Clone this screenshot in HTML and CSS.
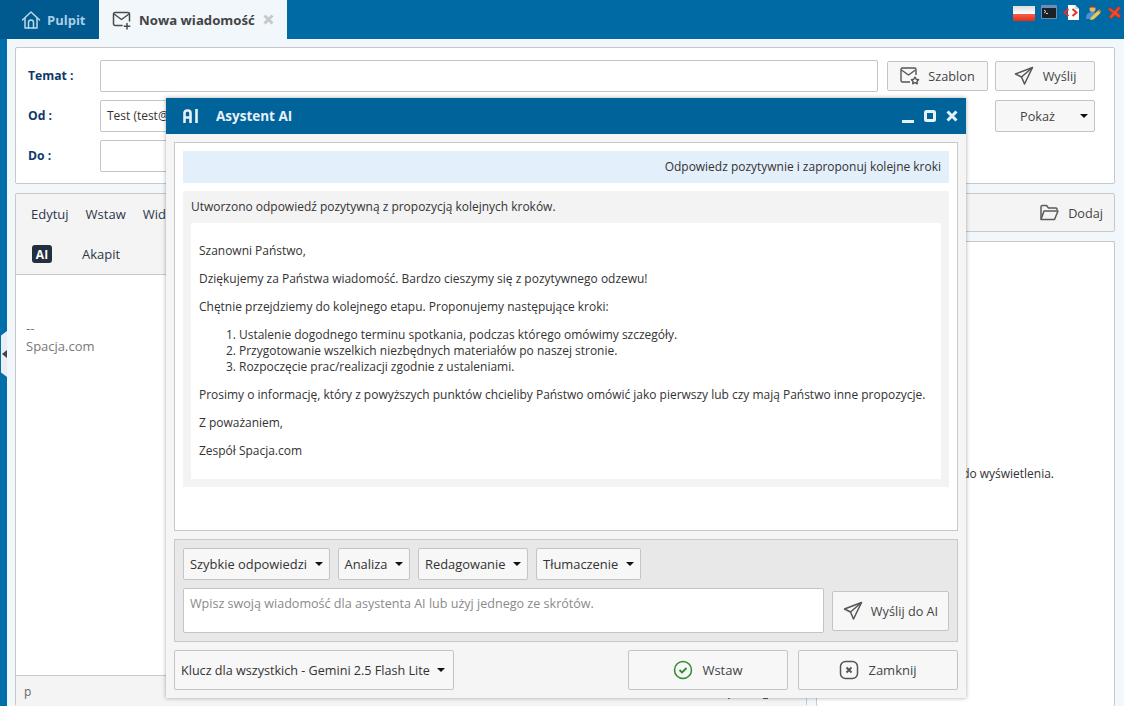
FILE: index.html
```html
<!DOCTYPE html>
<html lang="pl">
<head>
<meta charset="utf-8">
<title>Nowa wiadomość</title>
<link rel="stylesheet" href="styles.css">
</head>
<body>
<div class="app">
  <header class="topbar">
    <nav class="tabs">
      <a class="tab tab-home">
        <svg class="ico-home" width="20" height="20" viewBox="0 0 20 20" fill="none" stroke="#bcd9ea" stroke-width="1.5" stroke-linejoin="round" stroke-linecap="round"><path d="M1.5 10 10 2l8.500 8"/><path d="M4 8.500V18h12V8.500"/><path d="M7.500 18v-5.500a2.500 2.500 0 0 1 5 0V18"/></svg>
        <span>Pulpit</span>
      </a>
      <a class="tab tab-active">
        <svg width="20" height="20" viewBox="0 0 20 20" fill="none" stroke="#4b4b4b" stroke-width="1.500" stroke-linejoin="round" stroke-linecap="round"><path d="M10 15.500H3a1.500 1.500 0 0 1-1.500-1.500V4A1.500 1.500 0 0 1 3 2.500h13A1.500 1.500 0 0 1 17.500 4v7"/><path d="m2 4 7.500 5.500L17 4"/><path d="M15 13.500v5.500M12.300 16.300h5.500"/></svg>
        <span class="tab-title">Nowa wiadomość</span>
        <svg class="tab-close" width="11" height="11" viewBox="0 0 11 11"><path d="m1.500 1.500 8 8M9.500 1.500l-8 8" stroke="#c8c8c8" stroke-width="3"/></svg>
      </a>
    </nav>
    <div class="tray">
      <svg class="tray-flag" width="22" height="15" viewBox="0 0 22 15"><defs><linearGradient id="fw" x1="0" y1="0" x2="0" y2="1"><stop offset="0" stop-color="#dcdcdc"/><stop offset="1" stop-color="#fff"/></linearGradient><linearGradient id="fr" x1="0" y1="0" x2="0" y2="1"><stop offset="0" stop-color="#ff5a45"/><stop offset="1" stop-color="#e0301e"/></linearGradient></defs><rect width="22" height="8" fill="url(#fw)"/><rect y="8" width="22" height="7" fill="url(#fr)"/></svg>
      <svg width="16" height="14" viewBox="0 0 16 14"><rect width="16" height="14" rx="1" fill="#6d8cb8"/><rect x="1" y="3" width="14" height="10" fill="#1c2128"/><path d="m3 5 2 1.500L3 8" fill="none" stroke="#fff" stroke-width=".8"/><rect x="5" y="8" width="2" height=".8" fill="#fff"/></svg>
      <svg width="16" height="15" viewBox="0 0 16 15"><path d="M5 0h7l4 4v11H5z" fill="#fff"/><path d="M12 0v4h4z" fill="#d5d5d5"/><path d="M5.500 4 1.500 7.500l4 3.500M9.500 4l4 3.500-4 3.500" fill="none" stroke="#e5312a" stroke-width="2"/></svg>
      <svg width="16" height="15" viewBox="0 0 16 15"><circle cx="7.500" cy="4" r="3" fill="#eab27a"/><path d="M4.500 3.500a3 3 0 0 1 6 0l-1-1h-4z" fill="#7a4a1d"/><path d="M1 14c0-5 2-7 6-7s4 1 5 3l-5 4z" fill="#4a90d6"/><path d="m6 12.500 7-7 2.500 2.500-7 6.500-3.500.5z" fill="#f2c84b"/><path d="m13 5.500 1.200-1.200 2 2-1 1.500z" fill="#d9803a"/></svg>
      <svg width="15" height="14" viewBox="0 0 15 14"><path d="M2.500 2.500 7.500 6l4-4.500 2 1.500-3.500 4.500 4 3.500-2 2-4-3-3.500 3.500L2 12l3.500-4L1.500 4.500z" fill="#ee4a2c" stroke="#c9311b" stroke-width="1" stroke-linejoin="round"/></svg>
    </div>
  </header>

  <main class="content">
    <section class="card form">
      <div class="form-row">
        <label class="form-label">Temat :</label>
        <div class="field"></div>
        <button class="btn btn-szablon">
          <svg width="20" height="18" viewBox="0 0 20 18" fill="none" stroke="#555" stroke-width="1.400" stroke-linejoin="round"><path d="M10 15H2.500A1.500 1.500 0 0 1 1 13.500v-11A1.500 1.500 0 0 1 2.500 1h12A1.500 1.500 0 0 1 16 2.500V8"/><path d="m1.500 3 7 5 7-5"/><path d="m15 10 1.200 2.300 2.400.4-1.700 1.700.4 2.400-2.300-1.100-2.300 1.100.4-2.400-1.700-1.700 2.400-.4z"/></svg>
          Szablon
        </button>
        <button class="btn btn-send">
          <svg width="20" height="20" viewBox="0 0 20 20" fill="none" stroke="#555" stroke-width="1.500" stroke-linejoin="round"><path d="M18.500 1.500 1.500 8l6 3 3 7z"/><path d="M18.500 1.500 7.500 11"/></svg>
          Wyślij
        </button>
      </div>
      <div class="form-row">
        <label class="form-label">Od :</label>
        <div class="field field-text field-short">Test (test@spacja.com)</div>
        <button class="btn btn-send btn-dd">Pokaż<i class="caret caret-right"></i></button>
      </div>
      <div class="form-row">
        <label class="form-label">Do :</label>
        <div class="field field-short"></div>
      </div>
    </section>

    <section class="columns">
      <div class="card editor">
        <div class="editor-bar">
          <div class="menu"><span>Edytuj</span><span>Wstaw</span><span>Widok</span></div>
          <div class="menu menu-tools"><b class="ai-chip">AI</b><span>Akapit</span></div>
        </div>
        <div class="editor-body">
          <p>--</p>
          <p>Spacja.com</p>
        </div>
        <div class="editor-status">p<i class="status-marks"></i></div>
      </div>
      <div class="side">
        <div class="card side-head">
          <svg width="20" height="17" viewBox="0 0 20 17" fill="none" stroke="#5a5a5a" stroke-width="1.500" stroke-linejoin="round"><path d="M2 15V3a1.500 1.500 0 0 1 1.500-1.500h4L9.500 4H17a1 1 0 0 1 1 1v1"/><path d="M2 15.500h13.500L19 7H5z"/></svg>
          <span>Dodaj</span>
        </div>
        <div class="card side-body">Brak załączników do wyświetlenia.</div>
      </div>
    </section>
  </main>

  <div class="side-handle"><i></i></div>

  <div class="modal">
    <div class="modal-head">
      <svg class="modal-logo" width="16" height="14" viewBox="0 0 16 14" fill="none" stroke="#e8f1f7" stroke-width="2.600"><path d="M1.500 14V4a2.500 2.500 0 0 1 2.500-2.500h1A2.500 2.500 0 0 1 7.500 4v10M1.500 8.500h6"/><path d="M13.500 0v14"/></svg>
      <span class="modal-title">Asystent AI</span>
      <div class="modal-controls">
        <svg width="13" height="13" viewBox="0 0 13 13"><rect x="1" y="10" width="12" height="3" fill="#e8f1f7"/></svg>
        <svg width="12" height="12" viewBox="0 0 12 12"><rect x="1.500" y="1.500" width="9" height="9" rx="1" fill="none" stroke="#e8f1f7" stroke-width="3"/></svg>
        <svg width="12" height="12" viewBox="0 0 12 12"><path d="m1.500 1.500 9 9M10.500 1.500l-9 9" stroke="#e8f1f7" stroke-width="3"/></svg>
      </div>
    </div>
    <div class="modal-body">
      <div class="chat">
        <div class="msg-user">Odpowiedz pozytywnie i zaproponuj kolejne kroki</div>
        <div class="msg-ai">
          <p class="msg-intro">Utworzono odpowiedź pozytywną z propozycją kolejnych kroków.</p>
          <div class="letter">
            <p>Szanowni Państwo,</p>
            <p>Dziękujemy za Państwa wiadomość. Bardzo cieszymy się z pozytywnego odzewu!</p>
            <p>Chętnie przejdziemy do kolejnego etapu. Proponujemy następujące kroki:</p>
            <ol>
              <li>Ustalenie dogodnego terminu spotkania, podczas którego omówimy szczegóły.</li>
              <li>Przygotowanie wszelkich niezbędnych materiałów po naszej stronie.</li>
              <li>Rozpoczęcie prac/realizacji zgodnie z ustaleniami.</li>
            </ol>
            <p>Prosimy o informację, który z powyższych punktów chcieliby Państwo omówić jako pierwszy lub czy mają Państwo inne propozycje.</p>
            <p>Z poważaniem,</p>
            <p>Zespół Spacja.com</p>
          </div>
        </div>
      </div>
      <div class="composer">
        <div class="composer-menus">
          <button class="btn-menu">Szybkie odpowiedzi<i class="caret"></i></button>
          <button class="btn-menu">Analiza<i class="caret"></i></button>
          <button class="btn-menu">Redagowanie<i class="caret"></i></button>
          <button class="btn-menu">Tłumaczenie<i class="caret"></i></button>
        </div>
        <div class="composer-input">
          <div class="prompt">Wpisz swoją wiadomość dla asystenta AI lub użyj jednego ze skrótów.</div>
          <button class="btn btn-ai">
            <svg width="20" height="20" viewBox="0 0 20 20" fill="none" stroke="#555" stroke-width="1.500" stroke-linejoin="round"><path d="M18.500 1.500 1.500 8l6 3 3 7z"/><path d="M18.500 1.500 7.500 11"/></svg>
            Wyślij do AI
          </button>
        </div>
      </div>
      <div class="modal-foot">
        <button class="btn-model">Klucz dla wszystkich - Gemini 2.5 Flash Lite<i class="caret"></i></button>
        <button class="btn btn-foot">
          <svg width="20" height="20" viewBox="0 0 20 20" fill="none" stroke="#2e8b2e" stroke-width="1.500"><circle cx="10" cy="10" r="8.500"/><path d="m6.500 10 2.500 2.500 4.500-4.500" stroke-width="1.800"/></svg>
          Wstaw
        </button>
        <button class="btn btn-foot">
          <svg width="20" height="20" viewBox="0 0 20 20" fill="none" stroke="#555" stroke-width="1.500"><rect x="1.500" y="1.500" width="17" height="17" rx="5"/><path d="m7.500 7.500 5 5M12.500 7.500l-5 5" stroke-width="1.900"/></svg>
          Zamknij
        </button>
      </div>
    </div>
  </div>
</div>
</body>
</html>
```
FILE: styles.css
```css
* { box-sizing: border-box; }
html, body { margin: 0; height: 100%; overflow: hidden; }
body { font-family: "Open Sans", sans-serif; font-size: 11.980px; color: #333; background: #006ea9; }
p { margin: 0; }
button { font: inherit; color: inherit; cursor: default; }

.app { position: relative; width: 1124px; height: 706px; overflow: hidden; padding-left: 7px; display: flex; flex-direction: column; }

.topbar { height: 39px; margin-left: -7px; background: #006aa5; display: flex; justify-content: space-between; flex: none; }
.tabs { display: flex; }
.tab { display: flex; align-items: center; font-weight: 700; font-size: 13px; }
.tab-home { width: 99px; padding-left: 21px; gap: 6px; background: #00598f; color: #a9cfe4; }
.tab-active { width: 188px; padding-left: 13px; gap: 7px; background: #f2f7fc; color: #444; }
.tab-title { font-size: 13.200px; }
.tab-close { margin-left: 1px; }
.tray { display: flex; align-items: flex-start; gap: 6px; padding: 5px 2px 0 0; }
.tray-flag { margin-top: 1px; }

.content { flex: 1; background: #f2f7fc; padding: 8px 9px 0 8px; display: flex; flex-direction: column; gap: 9px; min-height: 0; }
.card { background: #fff; border: 1px solid #c8c8c8; border-radius: 2px; }

.form { height: 137px; padding: 12px 19px 0 12px; display: flex; flex-direction: column; gap: 8px; flex: none; }
.form-row { display: flex; align-items: center; height: 32px; }
.form-label { width: 72px; font-weight: 700; font-size: 12.200px; color: #0e3a6a; padding-bottom: 1px; }
.field { flex: 1; height: 32px; background: #fff; border: 1px solid #c4c4c4; border-radius: 2px; line-height: 30px; padding-left: 6px; }
.field-short { flex: none; width: 700px; }
.btn { display: flex; align-items: center; justify-content: center; background: #f7f7f7; border: 1px solid #c4c4c4; border-radius: 2px; padding: 0; color: #444; font-size: 12.700px; }
.btn-szablon { width: 101px; height: 30px; margin-left: 9px; gap: 8px; }
.btn-send { width: 100px; height: 30px; margin-left: 7px; gap: 9px; }
.btn-dd { height: 32px; position: relative; padding-right: 15px; margin-left: auto; }

.caret { display: inline-block; width: 0; height: 0; border: 4px solid transparent; border-top: 4px solid #111; border-bottom: 0; margin-left: 7.500px; }
.caret-right { position: absolute; right: 6px; top: 13px; margin-left: 0; }

.columns { flex: 1; display: flex; gap: 9px; min-height: 0; }
.editor { width: 792px; display: flex; flex-direction: column; border-bottom: 0; }
.editor-bar { height: 81px; background: #f4f4f4; border-bottom: 1px solid #c8c8c8; color: #2d3748; font-size: 13px; flex: none; }
.menu { display: flex; align-items: center; height: 40px; padding-left: 15px; gap: 17px; }
.menu-tools { padding-left: 16px; gap: 30px; }
.ai-chip { background: #222f3e; color: #fff; width: 20px; height: 18px; border-radius: 3px; display: flex; align-items: center; justify-content: center; font-size: 12px; }
.editor-body { flex: 1; padding: 44px 10px 0; color: #777; font-size: 13px; line-height: 18px; }
.editor-status { position: relative; height: 31px; background: #f4f4f4; border-top: 1px solid #c8c8c8; padding: 7px 8px; color: #666; flex: none; }
.status-marks { position: absolute; left: 712px; top: 22px; width: 40px; height: 1px; background: linear-gradient(90deg, #777 0 2px, transparent 2px 35px, #555 35px 40px); }

.side { flex: 1; display: flex; flex-direction: column; gap: 9px; }
.side-head { height: 39px; background: #f4f4f4; display: flex; align-items: center; justify-content: flex-end; gap: 9px; padding-right: 11px; color: #444; font-size: 12.700px; flex: none; }
.side-body { flex: 1; border-bottom: 0; text-align: center; padding: 223px 13px 0 0; }

.side-handle { position: absolute; left: 1px; top: 331px; width: 6px; height: 46px; background: #e9eef2; clip-path: polygon(0 10%, 100% 0, 100% 100%, 0 90%); display: flex; align-items: center; padding-left: 1px; }
.side-handle i { border: 4px solid transparent; border-right: 5px solid #444; border-left: 0; }

.modal { position: absolute; left: 166px; top: 98px; width: 800px; height: 600px; background: #f5f5f5; box-shadow: 0 0 4px rgba(0, 0, 0, .35); display: flex; flex-direction: column; }
.modal-head { height: 36px; background: #00639a; color: #e8f1f7; display: flex; align-items: center; padding: 0 8px 0 17px; flex: none; }
.modal-logo { margin-right: 17px; }
.modal-title { font-weight: 700; font-size: 13.500px; flex: 1; }
.modal-controls { display: flex; align-items: center; gap: 10px; }
.modal-body { flex: 1; padding: 8px; display: flex; flex-direction: column; gap: 8px; min-height: 0; }

.chat { height: 389px; background: #fff; border: 1px solid #c8c8c8; padding: 8px; display: flex; flex-direction: column; gap: 8px; flex: none; }
.msg-user { height: 32px; background: #e3f0fb; text-align: right; line-height: 32px; padding-right: 8px; }
.msg-ai { background: #f3f3f3; padding: 8px; }
.msg-intro { line-height: 16px; margin-bottom: 8px; }
.letter { background: #fff; padding: 20px 8px 20px; line-height: 16px; }
.letter p, .letter ol { margin: 0 0 12px; }
.letter p:last-child { margin-bottom: 0; }
.letter ol { padding-left: 40px; }

.composer { height: 103px; background: #e8e8e8; border: 1px solid #c8c8c8; padding: 8px; display: flex; flex-direction: column; gap: 8px; flex: none; }
.composer-menus { display: flex; gap: 8px; }
.btn-menu, .btn-model { display: flex; align-items: center; background: #f7f7f7; border: 1px solid #c4c4c4; border-radius: 2px; padding: 0 6px; height: 32px; color: #333; font-size: 12.900px; }
.composer-input { display: flex; gap: 8px; align-items: center; }
.prompt { flex: 1; height: 45px; background: #fff; border: 1px solid #c4c4c4; border-radius: 2px; padding: 6px; color: #8a8a8a; font-size: 12.570px; }
.btn-ai { width: 117px; height: 40px; gap: 8px; flex: none; }

.modal-foot { display: flex; align-items: center; height: 40px; gap: 10px; flex: none; }
.btn-model { height: 40px; width: 280px; margin-right: 164px; flex: none; font-size: 12.600px; }
.btn-foot { width: 160px; height: 40px; gap: 9px; flex: none; font-size: 13px; }
```
